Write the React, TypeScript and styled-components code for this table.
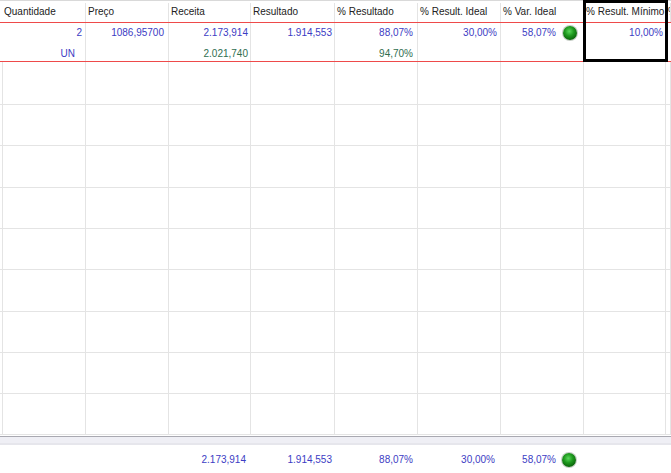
import React from "react";
import styled, { createGlobalStyle } from "styled-components";

const GlobalStyle = createGlobalStyle`
  html, body { margin: 0; padding: 0; background: #ffffff; }
  body { width: 671px; height: 473px; overflow: hidden; }
  * { box-sizing: border-box; }
`;

const COLS = "86px 83px 82px 84px 83px 83px 83px 82px 1fr";
const LINE = "#e4e4e4";

const Grid = styled.div`
  position: relative;
  width: 671px;
  height: 473px;
  display: flex;
  flex-direction: column;
  font-family: "Liberation Sans", Arial, sans-serif;
  font-size: 10px;
  line-height: 12px;
  overflow: hidden;
  background: #fff;
`;

const HeaderRow = styled.div`
  display: grid;
  grid-template-columns: ${COLS};
  border-top: 1px solid #d9d9d9;
  padding-top: 2px;
  border-bottom: 1px solid #ee4a4a;
`;

const HeaderCell = styled.div<{ $first?: boolean }>`
  height: 19px;
  padding: 3px 0 0 ${(p) => (p.$first ? "4px" : "2px")};
  border-right: 1px solid ${LINE};
  color: #222;
  white-space: nowrap;
  overflow: hidden;
`;

const RecordRow = styled.div`
  display: grid;
  grid-template-columns: ${COLS};
  border-bottom: 1px solid #ee4a4a;
`;

const RecordCell = styled.div<{ $pr?: number }>`
  display: flex;
  flex-direction: column;
  gap: 9px;
  padding: 4px ${(p) => p.$pr ?? 3}px 1px 2px;
  border-right: 1px solid ${LINE};
  white-space: nowrap;
  overflow: hidden;
`;

const Line = styled.div<{ $tone?: "blue" | "green" }>`
  height: 12px;
  display: flex;
  justify-content: flex-end;
  align-items: center;
  gap: 7px;
  color: ${(p) => (p.$tone === "green" ? "#2f6e50" : "#3c3cc4")};
`;

const Ball = styled.span`
  display: inline-block;
  width: 14px;
  height: 14px;
  flex: 0 0 14px;
  border-radius: 50%;
  background: radial-gradient(circle at 45% 38%, #5ad85a 0%, #1f9a1f 38%, #0c6a0c 70%, #0a4a0a 100%);
  box-shadow: 0 0 0 1px #c4ccc4;
`;

const EmptyRow = styled.div<{ $h: number }>`
  display: grid;
  grid-template-columns: ${COLS};
  height: ${(p) => p.$h}px;
  border-bottom: 1px solid ${LINE};
`;

const EmptyCell = styled.div<{ $first?: boolean }>`
  border-right: 1px solid ${LINE};
  ${(p) => (p.$first ? `margin-left: 2px; border-left: 1px solid ${LINE};` : "")}
`;

const Separator = styled.div`
  margin-top: 1px;
  height: 9px;
  border-top: 1px solid #a9a9b1;
  background: #efeff5;
  border-bottom: 2px solid #e6e6ec;
`;

const FooterRow = styled.div`
  display: grid;
  grid-template-columns: ${COLS};
  padding-top: 9px;
`;

const FooterCell = styled.div<{ $pr?: number }>`
  display: flex;
  justify-content: flex-end;
  align-items: center;
  gap: 6px;
  height: 12px;
  padding-right: ${(p) => p.$pr ?? 4}px;
  color: #3c3cc4;
  white-space: nowrap;
`;

const FocusBox = styled.div`
  position: absolute;
  left: 583px;
  top: 0;
  width: 85px;
  height: 62px;
  border: 3px solid #000;
  pointer-events: none;
`;

const headers = [
  "Quantidade",
  "Preço",
  "Receita",
  "Resultado",
  "% Resultado",
  "% Result. Ideal",
  "% Var. Ideal",
  "% Result. Mínimo",
  "% Result. Máximo",
];

const rowHeights = [43, 41, 42, 41, 41, 42, 41, 41, 41];

export default function App() {
  return (
    <>
      <GlobalStyle />
      <Grid>
        <HeaderRow>
          {headers.map((h, i) => (
            <HeaderCell key={h} $first={i === 0}>
              {h}
            </HeaderCell>
          ))}
        </HeaderRow>

        <RecordRow>
          <RecordCell $pr={3}>
            <Line>2</Line>
            <Line style={{ paddingRight: 7 }}>UN</Line>
          </RecordCell>
          <RecordCell $pr={4}>
            <Line>1086,95700</Line>
          </RecordCell>
          <RecordCell $pr={2}>
            <Line>2.173,914</Line>
            <Line $tone="green">2.021,740</Line>
          </RecordCell>
          <RecordCell $pr={2}>
            <Line>1.914,553</Line>
          </RecordCell>
          <RecordCell $pr={4}>
            <Line>88,07%</Line>
            <Line $tone="green">94,70%</Line>
          </RecordCell>
          <RecordCell $pr={3}>
            <Line>30,00%</Line>
          </RecordCell>
          <RecordCell $pr={6}>
            <Line>
              58,07%
              <Ball />
            </Line>
          </RecordCell>
          <RecordCell $pr={2}>
            <Line>10,00%</Line>
          </RecordCell>
          <RecordCell />
        </RecordRow>

        {rowHeights.map((h, r) => (
          <EmptyRow key={r} $h={h}>
            {headers.map((_, i) => (
              <EmptyCell key={i} $first={i === 0} />
            ))}
          </EmptyRow>
        ))}

        <Separator />

        <FooterRow>
          <FooterCell />
          <FooterCell />
          <FooterCell $pr={5}>2.173,914</FooterCell>
          <FooterCell $pr={3}>1.914,553</FooterCell>
          <FooterCell $pr={5}>88,07%</FooterCell>
          <FooterCell $pr={6}>30,00%</FooterCell>
          <FooterCell $pr={8}>
            58,07%
            <Ball />
          </FooterCell>
          <FooterCell />
          <FooterCell />
        </FooterRow>

        <FocusBox />
      </Grid>
    </>
  );
}
